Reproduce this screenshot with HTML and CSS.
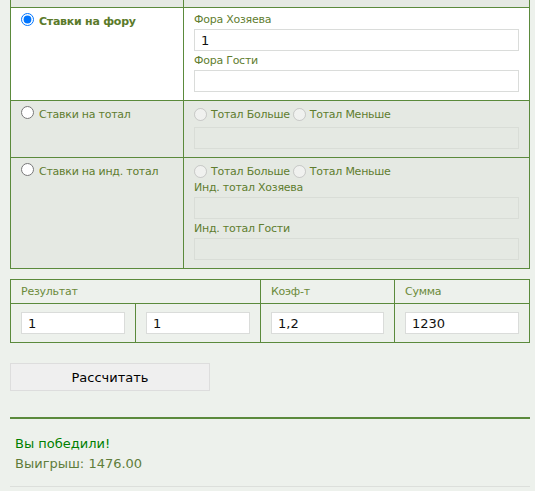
FILE: index.html
```html
<!DOCTYPE html>
<html lang="ru">
<head>
  <meta charset="UTF-8">
  <title>Калькулятор ставок</title>
  <link rel="stylesheet" href="styles.css">
</head>
<body>
  <div class="page">
    <!-- типы ставок -->
    <table class="bets">
      <tr class="stub">
        <td class="col-type"></td>
        <td></td>
      </tr>
      <tr class="bet-row active">
        <td class="col-type">
          <label class="bet-type">
            <input type="radio" name="bet" checked>
            <b>Ставки на фору</b>
          </label>
        </td>
        <td class="col-fields">
          <span class="field-label">Фора Хозяева</span>
          <input type="text" class="text-input" value="1">
          <span class="field-label next">Фора Гости</span>
          <input type="text" class="text-input">
        </td>
      </tr>
      <tr class="bet-row">
        <td class="col-type">
          <label class="bet-type">
            <input type="radio" name="bet">
            <span>Ставки на тотал</span>
          </label>
        </td>
        <td class="col-fields">
          <div class="radio-line">
            <label><input type="radio" disabled> Тотал Больше</label>
            <label><input type="radio" disabled> Тотал Меньше</label>
          </div>
          <input type="text" class="text-input" disabled>
        </td>
      </tr>
      <tr class="bet-row">
        <td class="col-type">
          <label class="bet-type">
            <input type="radio" name="bet">
            <span>Ставки на инд. тотал</span>
          </label>
        </td>
        <td class="col-fields">
          <div class="radio-line tight">
            <label><input type="radio" disabled> Тотал Больше</label>
            <label><input type="radio" disabled> Тотал Меньше</label>
          </div>
          <span class="field-label">Инд. тотал Хозяева</span>
          <input type="text" class="text-input" disabled>
          <span class="field-label next">Инд. тотал Гости</span>
          <input type="text" class="text-input" disabled>
        </td>
      </tr>
    </table>

    <!-- результат и сумма -->
    <table class="result">
      <colgroup>
        <col class="c1"><col class="c2"><col class="c3"><col class="c4">
      </colgroup>
      <tr class="result-head">
        <th colspan="2">Результат</th>
        <th>Коэф-т</th>
        <th>Сумма</th>
      </tr>
      <tr>
        <td><input type="text" class="text-input" value="1"></td>
        <td><input type="text" class="text-input" value="1"></td>
        <td><input type="text" class="text-input" value="1,2"></td>
        <td><input type="text" class="text-input" value="1230"></td>
      </tr>
    </table>

    <button class="btn-calc">Рассчитать</button>

    <div class="outcome">
      <div class="outcome-win">Вы победили!</div>
      <div class="outcome-sum">Выигрыш: 1476.00</div>
    </div>
  </div>
</body>
</html>
```

FILE: styles.css
```css
body {
  margin: 0;
  background: #edf1ec;
  font-family: "DejaVu Sans", Verdana, sans-serif;
  font-size: 11px;
  letter-spacing: -0.25px;
  color: #5f7d2f;
}
.page {
  width: 520px;
  margin-left: 10px;
}

/* типы ставок */
.bets {
  width: 100%;
  border-collapse: collapse;
  table-layout: fixed;
}
.bets td {
  border: 1px solid #5b8a3c;
  vertical-align: top;
  padding: 0;
}
.bets .stub td {
  border-top: none;
  height: 7px;
  background: #e5e9e3;
}
.col-type {
  width: 172px;
}
.bet-row td {
  background: #e5e9e3;
}
.bet-row.active td {
  background: #fff;
}
.bet-type {
  display: flex;
  align-items: flex-start;
  gap: 5px;
  padding: 5px 10px;
  line-height: 17px;
}
.bet-type input {
  margin: 0;
  width: 13px;
  height: 13px;
}
.bet-type b {
  color: #5b7a2a;
}
.bets .col-fields {
  padding: 4px 10px 8px;
}
.field-label {
  display: block;
  line-height: 16px;
  margin-bottom: 1px;
}
.field-label.next {
  margin-top: 2px;
}
.radio-line {
  display: flex;
  align-items: center;
  gap: 3px;
  height: 18px;
  margin-bottom: 4px;
}
.radio-line.tight {
  margin-bottom: 0;
}
.radio-line label {
  display: flex;
  align-items: center;
  gap: 4px;
}
.radio-line input {
  margin: 0;
  width: 13px;
  height: 13px;
}
.text-input {
  display: block;
  width: 100%;
  height: 22px;
  box-sizing: border-box;
  border: 1px solid #dadcda;
  background: #fff;
  padding: 0 6px;
  font-family: "DejaVu Sans", Verdana, sans-serif;
  font-size: 13px;
  color: #111;
  outline: none;
}
.text-input:disabled {
  background: #e5e9e3;
  border-color: #d9ddd7;
}

/* результат */
.result {
  width: 100%;
  margin-top: 10px;
  border-collapse: collapse;
  table-layout: fixed;
}
.result .c1, .result .c2 { width: 125px; }
.result .c3 { width: 134px; }
.result th, .result td {
  border: 1px solid #5b8a3c;
  padding: 0 10px;
}
.result th {
  height: 23px;
  text-align: left;
  font-weight: normal;
  color: #6b8a3a;
}
.result td {
  padding-top: 8px;
  padding-bottom: 8px;
}

.btn-calc {
  display: block;
  margin-top: 20px;
  width: 200px;
  height: 28px;
  background: #efefef;
  border: 1px solid #dddddd;
  font-family: "DejaVu Sans", Verdana, sans-serif;
  font-size: 13px;
  color: #000;
  cursor: pointer;
}

.outcome {
  margin-top: 26px;
  border-top: 2px solid #5b8a3c;
  border-bottom: 1px solid #dcdfdb;
  padding: 15px 5px 12px;
  font-size: 13px;
  letter-spacing: 0;
  line-height: 20px;
}
.outcome-win {
  color: #008000;
}
.outcome-sum {
  color: #5f7d3a;
}
```
